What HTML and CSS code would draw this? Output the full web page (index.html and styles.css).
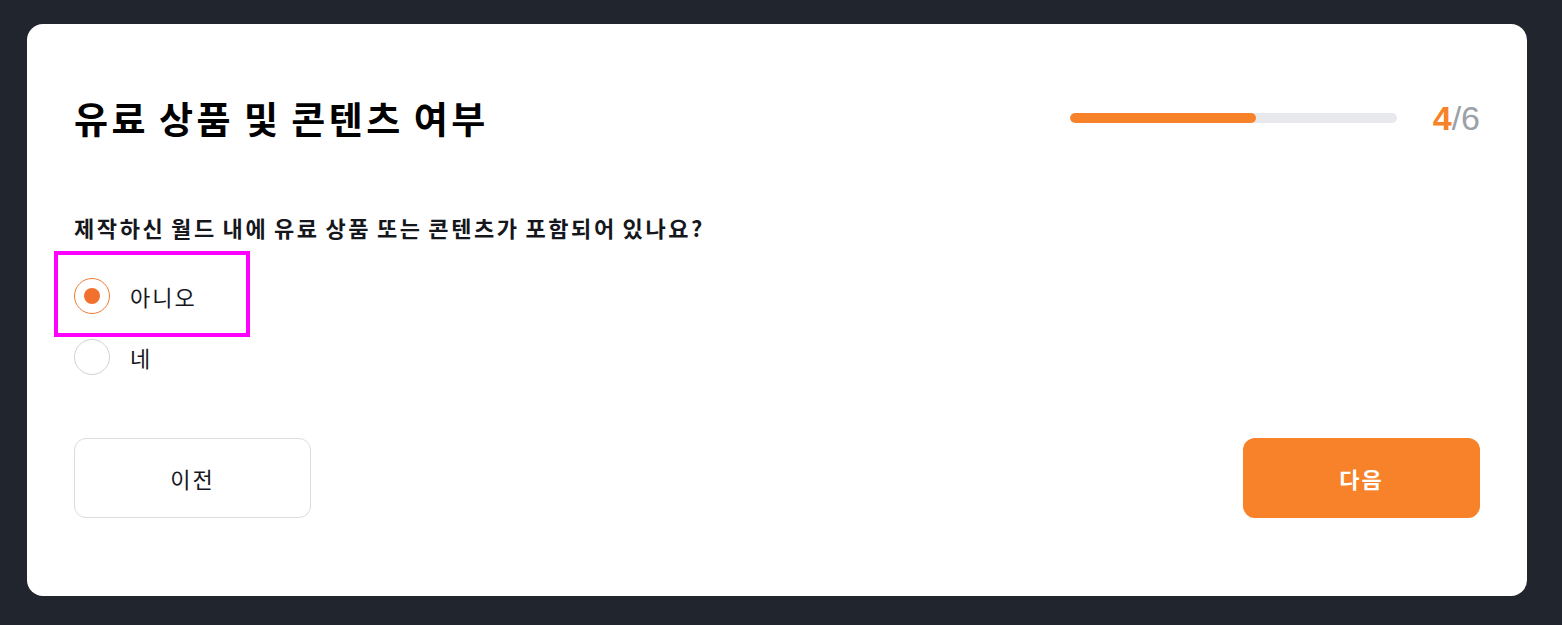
FILE: index.html
```html
<!DOCTYPE html>
<html lang="ko">
<head>
  <meta charset="UTF-8">
  <meta name="viewport" content="width=device-width, initial-scale=1.0">
  <title>유료 상품 및 콘텐츠 여부</title>
  <link rel="stylesheet" href="styles.css">
</head>
<body>

  <div class="card">

    <div class="card-header d-flex justify-between align-center">
      <h2 class="title">유료 상품 및 콘텐츠 여부</h2>
      <div class="progress d-flex align-center">
        <div class="progress-track">
          <div class="progress-fill" style="width: 57%"></div>
        </div>
        <span class="progress-count"><b>4</b>/6</span>
      </div>
    </div>

    <p class="question">제작하신 월드 내에 유료 상품 또는 콘텐츠가 포함되어 있나요?</p>

    <div class="options">
      <label class="option option-highlight">
        <span class="radio checked"></span>
        <span class="option-label">아니오</span>
      </label>
      <label class="option">
        <span class="radio"></span>
        <span class="option-label">네</span>
      </label>
    </div>

    <div class="actions d-flex justify-between">
      <button class="btn btn-prev">이전</button>
      <button class="btn btn-next">다음</button>
    </div>

  </div>

</body>
</html>
```

FILE: styles.css
```css
*,
*:before,
*:after {
  box-sizing: border-box;
}
html, body {
  height: 100%;
}
body {
  margin: 0;
  padding: 24px 0 0 27px;
  background: #21252e;
  font-family: "Noto Sans CJK KR", "Noto Sans", sans-serif;
  color: #15171c;
}

.d-flex {
  display: flex;
}
.justify-between {
  justify-content: space-between;
}
.align-center {
  align-items: center;
}

.card {
  width: 1500px;
  background: #fff;
  border-radius: 16px;
  padding: 72px 47px 78px 47px;
}

.card-header {
  height: 44px;
}

.title {
  margin: 0;
  font-size: 37px;
  font-weight: 700;
  line-height: 44px;
  letter-spacing: 3.5px;
  word-spacing: -4px;
  color: #000;
}

.progress {
  gap: 36px;
}
.progress-track {
  width: 327px;
  height: 10px;
  border-radius: 5px;
  background: #e8e9ed;
  overflow: hidden;
}
.progress-fill {
  height: 100%;
  border-radius: 5px;
  background: #f8822a;
}
.progress-count {
  font-family: "Liberation Sans", Arial, sans-serif;
  font-size: 34px;
  line-height: 44px;
  color: #9ca0a8;
}
.progress-count b {
  color: #f8822a;
  font-weight: 700;
}

.question {
  margin: 73px 0 0;
  font-size: 22px;
  font-weight: 700;
  line-height: 28px;
  letter-spacing: 2.6px;
  word-spacing: -3px;
}

.options {
  margin-top: 35px;
  display: flex;
  flex-direction: column;
  gap: 21px;
}
.option {
  position: relative;
  display: flex;
  align-items: center;
  gap: 20px;
  height: 40px;
  font-size: 22px;
  letter-spacing: 2px;
  cursor: pointer;
}
.option-highlight:after {
  content: "";
  position: absolute;
  left: -20px;
  top: -25px;
  width: 196px;
  height: 86px;
  border: 4px solid #ff00ff;
}

.radio {
  width: 36px;
  height: 36px;
  border-radius: 50%;
  border: 1px solid #d0d1d4;
  background: #fff;
  display: flex;
  align-items: center;
  justify-content: center;
}
.radio.checked {
  border-color: #f07b32;
}
.radio.checked:before {
  content: "";
  width: 16px;
  height: 16px;
  border-radius: 50%;
  background: #f2712c;
}

.actions {
  margin-top: 61px;
}
.btn {
  width: 237px;
  height: 80px;
  border-radius: 12px;
  font-family: inherit;
  font-size: 22px;
  letter-spacing: 2px;
  cursor: pointer;
}
.btn-prev {
  background: #fff;
  border: 1px solid #dcdcdf;
  color: #15171c;
}
.btn-next {
  background: #f8822a;
  border: none;
  color: #fff;
  font-weight: 700;
}
```
